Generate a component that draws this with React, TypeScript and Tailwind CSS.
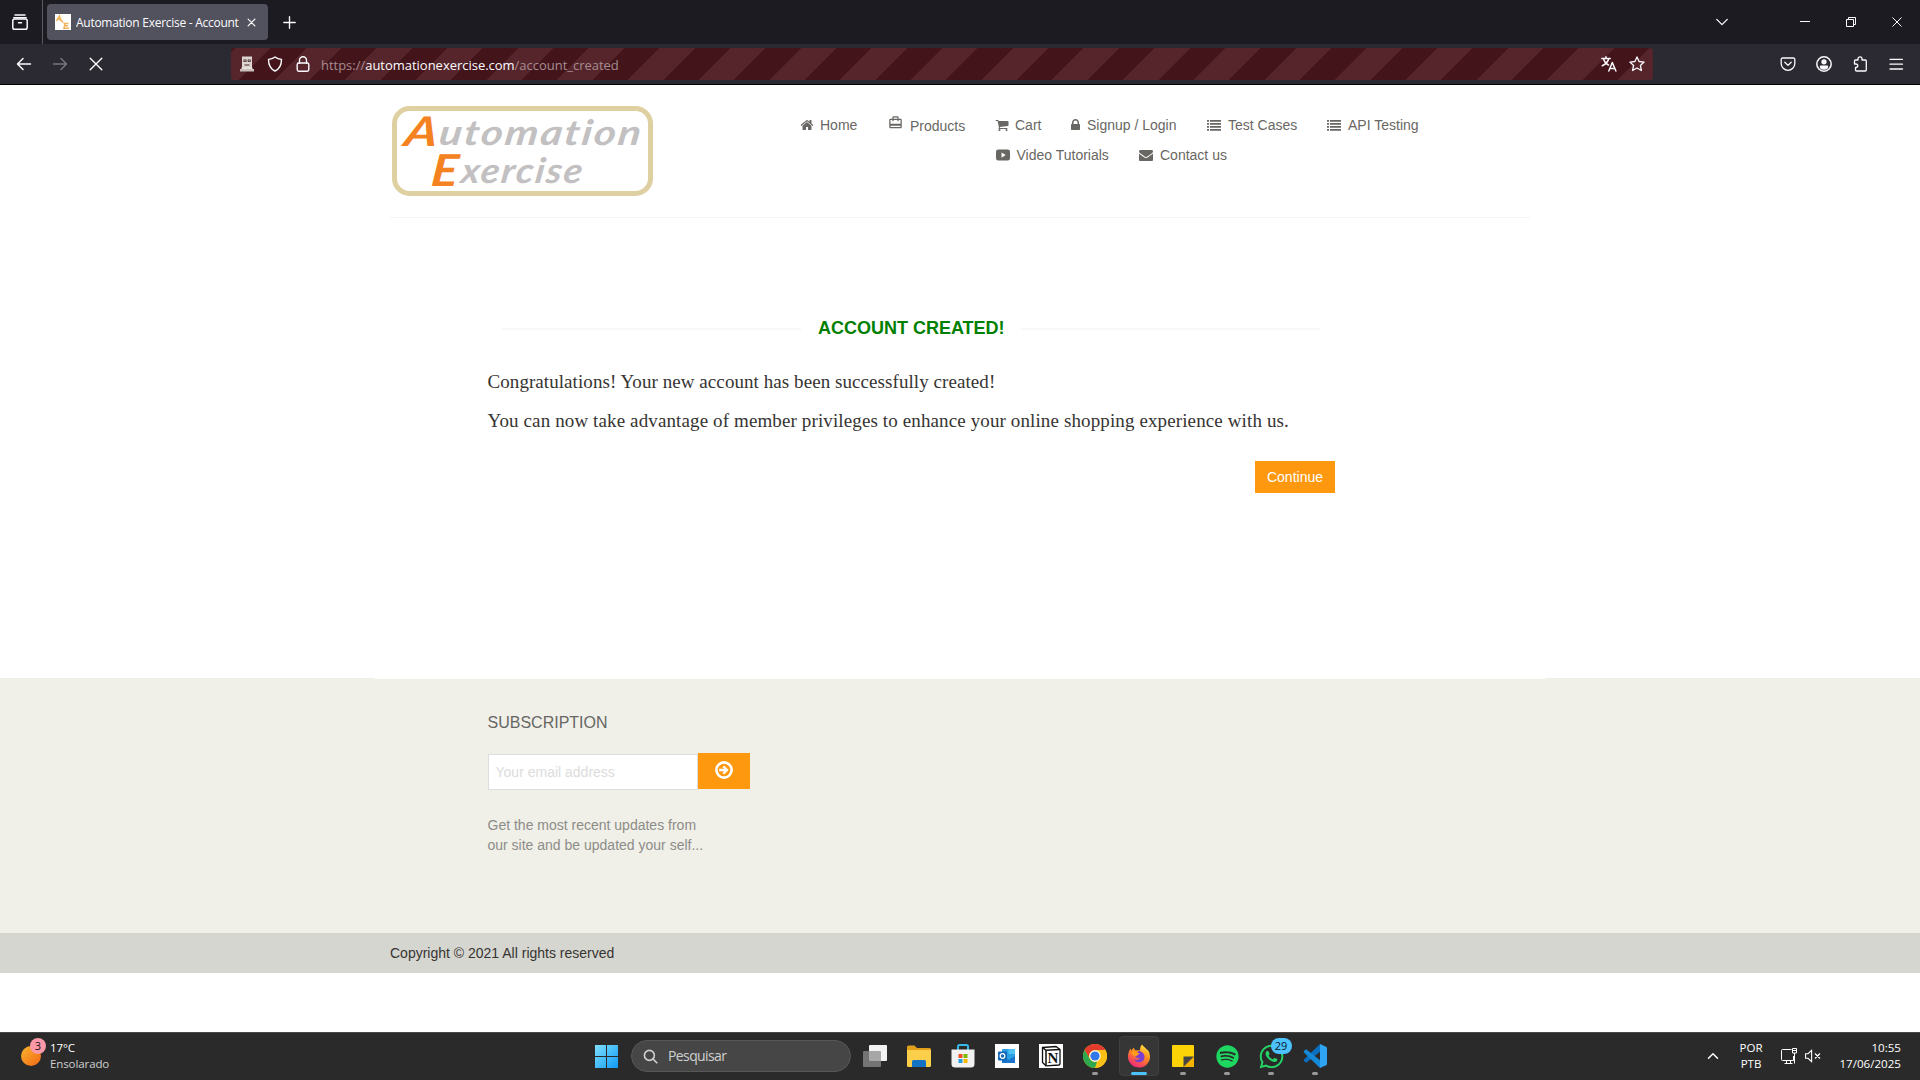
import type { ReactNode } from "react";
import { MdCardTravel } from "react-icons/md";
import { FaSpotify, FaWhatsapp } from "react-icons/fa";

function Stroke({ children, size = 16, w = 1.3, cls = "" }: { children: ReactNode; size?: number; w?: number; cls?: string }) {
  return (
    <svg width={size} height={size} viewBox="0 0 16 16" fill="none" stroke="currentColor" strokeWidth={w} strokeLinecap="round" strokeLinejoin="round" className={`shrink-0 ${cls}`}>
      {children}
    </svg>
  );
}

function Awesome({ d, w = 14, box = "0 0 1792 1792" }: { d: string; w?: number; box?: string }) {
  return (
    <svg width={w} height={14} viewBox={box} fill="currentColor" className="shrink-0">
      <path d={d} fillRule="evenodd" />
    </svg>
  );
}

const HOME =
  "M1472 992v480q0 26-19 45t-45 19h-384v-384h-256v384h-384q-26 0-45-19t-19-45v-480q0-1 .5-3t.5-3l575-474 575 474q1 2 1 6zm223-69l-62 74q-8 9-21 11h-3q-13 0-21-7l-692-577-692 577q-12 8-24 7-13-2-21-11l-62-74q-8-10-7-23.5t11-21.5l719-599q32-26 76-26t76 26l244 204v-195q0-14 9-23t23-9h192q14 0 23 9t9 23v408l219 182q10 8 11 21.5t-7 23.5z";
const CART =
  "M704 1536q0 52-38 90t-90 38-90-38-38-90 38-90 90-38 90 38 38 90zm896 0q0 52-38 90t-90 38-90-38-38-90 38-90 90-38 90 38 38 90zm128-1088v512q0 24-16.5 42.5t-40.5 21.5l-1044 122q13 60 13 70 0 16-24 64h920q26 0 45 19t19 45-19 45-45 19h-1024q-26 0-45-19t-19-45q0-11 8-31.5t16-36 21.5-40 15.5-29.5l-177-823h-204q-26 0-45-19t-19-45 19-45 45-19h256q16 0 28.5 6.5t19.5 15.5 13 24.5 8 26 5.5 29.5 4.5 26h1201q26 0 45 19t19 45z";
const LOCK =
  "M640 768h512v-192q0-106-75-181t-181-75-181 75-75 181v192zm832 96v576q0 40-28 68t-68 28h-960q-40 0-68-28t-28-68v-576q0-40 28-68t68-28h32v-192q0-184 132-316t316-132 316 132 132 316v192h32q40 0 68 28t28 68z";
const LIST =
  "M0 256h256v220H0zM0 640h256v220H0zM0 1024h256v220H0zM0 1408h256v220H0zM384 256h1408v220H384zM384 640h1408v220H384zM384 1024h1408v220H384zM384 1408h1408v220H384z";
const PLAY =
  "M288 192h1216q288 0 288 288v832q0 288-288 288H288q-288 0-288-288V480q0-288 288-288zM704 560v672l540-336z";
const MAIL =
  "M1792 710v794q0 66-47 113t-113 47h-1472q-66 0-113-47t-47-113v-794q44 49 101 87 362 246 497 345 57 42 92.5 65.5t94.5 48 110 24.5h2q51 0 110-24.5t94.5-48 92.5-65.5q170-123 498-345 57-39 100-87zm0-294q0 79-49 151t-122 123q-376 261-468 325-10 7-42.5 31t-54 38.5-52 32.5-57.5 27-50 9h-2q-23 0-50-9t-57.5-27-52-32.5-54-38.5-42.5-31q-91-64-262-182.5t-205-142.5q-62-42-117-115.5t-55-136.5q0-78 41.5-130t118.5-52h1472q65 0 112.5 47t47.5 113z";

function TabStrip() {
  return (
    <div className="flex h-11 items-center bg-[#1c1b22] text-[#fbfbfe]">
      <div className="flex h-11 w-[43px] items-center justify-center border-r border-[#5b5a63] pr-0.5">
        <Stroke w={1.5}>
          <path d="M3 1h10M1.8 3.8h12.4" />
          <rect x="0.8" y="5" width="14.4" height="10.2" rx="1.8" fill="none" />
          <path d="M6.5 8.7h3" />
        </Stroke>
      </div>
      <div className="ml-1 flex h-9 w-[221px] items-center rounded bg-[#52525e] pl-2">
        <svg width="16" height="16" viewBox="0 0 16 16" className="shrink-0">
          <rect width="16" height="16" fill="#fff" />
          <path d="M1.500 7l3-5 1 5M2.500 5.200l4-.7M8.500 9.500h5M10 9.500l-1 4.700h5M9.500 11.800h3.500M6 6l2 2.500" stroke="#f0b35c" strokeWidth="1.500" fill="none" />
        </svg>
        <span className="ml-[5px] w-[168px] overflow-hidden whitespace-nowrap pt-px font-['Open_Sans','Noto_Sans',sans-serif] text-[12px] tracking-[-0.27px]">Automation Exercise - Account</span>
        <Stroke size={9} w={2.2} cls="ml-[3px]">
          <path d="M2 2l12 12M14 2L2 14" />
        </Stroke>
      </div>
      <Stroke size={13} w={1.7} cls="ml-[15px]">
        <path d="M8 1v14M1 8h14" />
      </Stroke>
      <div className="ml-auto flex items-center">
        <Stroke size={14} w={1.5} cls="mr-[71px]">
          <path d="M2 5l6 6 6-6" />
        </Stroke>
        <svg width="10" height="10" className="mr-9" stroke="currentColor"><path d="M0 4.5h10" /></svg>
        <svg width="10" height="10" className="mr-9" stroke="currentColor" fill="none"><path d="M.5 2.5h7v7h-7zM2.5 2.5v-2h7v7h-2" /></svg>
        <svg width="10" height="10" className="mr-[18px]" stroke="currentColor"><path d="M.5.5l9 9M9.5.5l-9 9" /></svg>
      </div>
    </div>
  );
}

function NavBar() {
  return (
    <div className="flex h-[41px] items-center border-b border-black bg-[#2b2a33] text-[#fbfbfe]">
      <div className="flex w-[231px] gap-5 pl-4">
        <Stroke w={1.5}><path d="M1.500 8h13M7 2.500L1.500 8 7 13.500" /></Stroke>
        <Stroke w={1.5} cls="text-[#77767e]"><path d="M14.500 8H1.500M9 2.500L14.500 8 9 13.500" /></Stroke>
        <Stroke w={1.4}><path d="M2.200 2.200l11.600 11.600M13.800 2.200L2.200 13.800" /></Stroke>
      </div>
      <div className="flex h-8 w-[1422px] items-center rounded-[3px] bg-[repeating-linear-gradient(-45deg,#55252b_0_25px,#43151b_25px_50px)] pl-2">
        <svg width="16" height="16" viewBox="0 0 16 16">
          <path d="M3 .5h10V12H3z" fill="#ddd5d0" />
          <path d="M1 13h14v2.500H1z" fill="#c9c0bc" />
          <path d="M2.500 11.500h11V13h-11z" fill="#e8e0dc" />
          <path d="M4.500 3.500h3v2.500h-3zM8.700 3.500h3v2.500h-3zM5.500 8.500h5v1h-5z" fill="#4b2b2e" />
          <path d="M5.500 4.200h1v1h-1zM9.700 4.200h1v1h-1z" fill="#fff" />
        </svg>
        <Stroke w={1.4} cls="ml-3"><path d="M8 1C6 2.500 3.500 3.200 1.500 3.400c0 5 1.500 9.200 6.500 11.600 5-2.400 6.500-6.600 6.500-11.600C12.500 3.200 10 2.500 8 1z" /></Stroke>
        <Stroke w={1.4} cls="ml-3"><path d="M4.500 7V4.300a3.500 3.500 0 017 0V7" /><rect x="2.200" y="7" width="11.600" height="8.200" rx="1.600" /></Stroke>
        <span className="ml-2.5 whitespace-nowrap pt-px font-['Open_Sans','Noto_Sans',sans-serif] text-[13px] leading-5 tracking-[-0.02px] text-[#a58c90]">
          https://<span className="text-[#fbfbfe]">automationexercise.com</span>/account_created
        </span>
        <Stroke w={1.5} cls="ml-auto"><path d="M.8 2.500h8.400M5 .8v1.700M7.800 2.500C7 6 4 8.500 1.300 9.800M2.500 2.500C3.200 5.500 5.500 8 7.500 9M7.800 15l3.500-8.500L14.900 15M9 12.400h4.700" /></Stroke>
        <Stroke w={1.300} cls="ml-3 mr-2"><path d="M8 .9l2.100 4.600 5 .6-3.700 3.400 1 5L8 12l-4.400 2.500 1-5L.9 6.100l5-.6z" /></Stroke>
      </div>
      <div className="ml-auto flex gap-5 pr-4">
        <Stroke w={1.300}><path d="M2.500 2h11a1.300 1.300 0 011.300 1.300V7.500a6.800 6.800 0 01-13.600 0V3.300A1.300 1.300 0 012.500 2zM4.800 6.300L8 9.400l3.200-3.100" /></Stroke>
        <Stroke w={1.500}><circle cx="8" cy="8" r="7.200" /><circle cx="8" cy="5.800" r="1.900" fill="currentColor" /><path d="M4.500 10.200h7c0 1.500-1.500 2.800-3.500 2.800s-3.500-1.300-3.500-2.800z" fill="currentColor" /></Stroke>
        <Stroke w={1.300}><path d="M6 4V2.800a2 2 0 014 0V4h3.300c.7 0 1 .4 1 1v9c0 .7-.4 1-1 1H4.500c-.7 0-1-.4-1-1v-2.500H4a1.700 1.700 0 000-3.500H2.500V5c0-.6.400-1 1-1z" /></Stroke>
        <Stroke w={1.300}><path d="M2 3.300h12.500M2 8.200h12.500M2 13h12.500" /></Stroke>
      </div>
    </div>
  );
}

function Logo() {
  return (
    <svg width="261" height="90" viewBox="0 0 261 90" className="shrink-0" fontStyle="italic">
      <rect x="2.500" y="2.500" width="256" height="85" rx="15" fill="#fff" stroke="#dfd0a1" strokeWidth="5" />
      <g fontFamily="Lato, sans-serif" fontWeight="700" fill="#c2c0c1" style={{ fontVariantLigatures: "none" }}>
        <text transform="translate(46 39) skewX(-8) scale(1.2 1)" fontSize="35" textLength="168" lengthAdjust="spacing">utomation</text>
        <text transform="translate(68 77) skewX(-8) scale(1.100 1)" fontSize="35" textLength="110" lengthAdjust="spacing">xercise</text>
      </g>
      <g fontFamily="Lato, sans-serif" fontWeight="700" fill="#f58220">
        <text transform="translate(11 40) skewX(-10)" fontSize="41" textLength="33" lengthAdjust="spacingAndGlyphs">A</text>
        <text transform="translate(38 80) skewX(-6)" fontSize="44" textLength="27" lengthAdjust="spacingAndGlyphs">E</text>
      </g>
    </svg>
  );
}

function Item({ icon, label, cls }: { icon: ReactNode; label: string; cls: string }) {
  return (
    <a className={`flex shrink-0 items-center whitespace-nowrap ${cls}`}>
      {icon}
      {label}
    </a>
  );
}

function Header() {
  return (
    <header className="mx-auto flex h-[133px] w-[1140px] border-b border-[#f3f3f3] pt-[21px]">
      <div className="w-[410px] pl-0.5"><Logo /></div>
      <nav className="text-[14px] leading-5 text-[#696763]">
        <div className="flex pt-[7px]">
          <Item cls="w-[88px] gap-1.5" icon={<Awesome d={HOME} />} label="Home" />
          <Item cls="w-[107px] gap-[7px] pt-0.5" icon={<MdCardTravel size={15} className="mb-1.5 shrink-0" />} label="Products" />
          <Item cls="w-[76px] gap-1.5" icon={<Awesome d={CART} />} label="Cart" />
          <Item cls="w-[136px] gap-[7px]" icon={<Awesome d={LOCK} w={9} box="320 0 1152 1792" />} label="Signup / Login" />
          <Item cls="w-[120px] gap-[7px]" icon={<Awesome d={LIST} />} label="Test Cases" />
          <Item cls="gap-[7px]" icon={<Awesome d={LIST} />} label="API Testing" />
        </div>
        <div className="flex pl-[195.5px] pt-[9px]">
          <Item cls="w-[143.5px] gap-[7px]" icon={<Awesome d={PLAY} />} label="Video Tutorials" />
          <Item cls="gap-[7px]" icon={<Awesome d={MAIL} />} label="Contact us" />
        </div>
      </nav>
    </header>
  );
}

function Main() {
  return (
    <main className="mx-auto h-[460px] w-[1170px]">
      <div className="ml-[112.5px] w-[847.5px] pt-[100px]">
        <div className="flex items-center justify-center">
          <div className="mt-0.5 h-0.5 w-[299px] bg-[#f7f7f7]" />
          <h2 className="w-[220px] text-center text-[18px] font-bold leading-5 text-[#008000]">ACCOUNT CREATED!</h2>
          <div className="mt-0.5 h-0.5 w-[299px] bg-[#f7f7f7]" />
        </div>
        <div className="flex flex-col gap-[11px] whitespace-nowrap pt-[30px] font-['Liberation_Serif',serif] text-[19px] leading-7 text-[#363432]">
          <p className="tracking-[0.07px]">Congratulations! Your new account has been successfully created!</p>
          <p className="tracking-[0.12px]">You can now take advantage of member privileges to enhance your online shopping experience with us.</p>
        </div>
        <button className="ml-auto mt-[26px] block h-8 w-20 bg-[#fe980f] text-[14px] text-white">Continue</button>
      </div>
    </main>
  );
}

function Footer() {
  return (
    <footer>
      <div className="h-[255px] bg-[#f0f0e9]">
        <div className="mx-auto h-px w-[1170px] bg-white" />
        <div className="ml-[487.5px] w-[262.5px] pt-[34px]">
          <h2 className="text-[16px] leading-5 text-[#666663]">SUBSCRIPTION</h2>
          <div className="flex pt-[20px]">
            <div className="mt-px flex h-9 w-[210.5px] items-center border border-[#ddd] bg-white pl-[7px] text-[14px] text-[#dcdcdc]">Your email address</div>
            <button className="flex h-9 w-[52px] items-center justify-center bg-[#fe980f] pb-0.5">
              <svg width="18" height="18" viewBox="0 0 18 18" fill="none" stroke="#fff" strokeWidth="2.600">
                <circle cx="9" cy="9" r="7.600" />
                <path d="M4.200 9h6" />
                <path d="M8.300 5.300L12 9l-3.700 3.700" strokeWidth="2.400" />
              </svg>
            </button>
          </div>
          <p className="whitespace-nowrap pt-[25px] text-[14px] leading-5 text-[#8c8c88]">
            Get the most recent updates from
            <br />
            our site and be updated your self...
          </p>
        </div>
      </div>
      <div className="h-10 bg-[#d6d6d0] pl-[390px] text-[14px] leading-10 text-[#363432]">Copyright © 2021 All rights reserved</div>
    </footer>
  );
}

function Cell({ children, state = "" }: { children: ReactNode; state?: "" | "run" | "active" }) {
  return (
    <div className="relative flex h-12 w-11 items-center justify-center">
      {state === "active" && <div className="absolute inset-x-[2px] inset-y-1 rounded border border-[#3f3f3f] bg-[#363636]" />}
      <div className="relative">{children}</div>
      {state === "run" && <div className="absolute bottom-[5px] left-[19px] h-[3px] w-1.5 rounded-full bg-[#9a9a9a]" />}
      {state === "active" && <div className="absolute bottom-[5px] left-3.5 h-[3px] w-4 rounded-full bg-[#4cc2ff]" />}
    </div>
  );
}

function Taskbar() {
  return (
    <div className="flex h-12 items-center bg-[#2a2a2a] font-['Open_Sans','Noto_Sans',sans-serif] text-[12px] leading-4 text-white shadow-[inset_0_1px_0_#474747]">
      <div className="flex w-[595px] items-center pl-[21px]">
        <div className="relative h-5 w-5 rounded-full bg-linear-to-br from-[#f5b52e] to-[#f26414]">
          <span className="absolute -top-2 left-[9px] flex h-4 w-4 items-center justify-center rounded-full bg-[#fb99a8] text-[11px] text-[#241014]">3</span>
        </div>
        <div className="ml-[9px] text-[11.500px] tracking-[-0.1px]">
          <div>17°C</div>
          <div className="text-[#cfcfcf]">Ensolarado</div>
        </div>
      </div>
      <svg width="23" height="23" viewBox="0 0 23 23">
        <defs><linearGradient id="win" x1="0" y1="0" x2="1" y2="1"><stop stopColor="#7fe0ff" /><stop offset="1" stopColor="#0f9bf5" /></linearGradient></defs>
        <path d="M0 0h11v11H0zM12 0h11v11H12zM0 12h11v11H0zM12 12h11v11H12z" fill="url(#win)" />
      </svg>
      <div className="ml-[13px] mr-0.5 flex h-8 w-[220px] items-center rounded-full border border-[#575757] bg-[#464646] pl-[11px] text-[14px] text-[#d0d0d0]">
        <Stroke w={1.700} size={15}><circle cx="6.800" cy="6.800" r="5.300" /><path d="M10.700 10.700l4 4" /></Stroke>
        <span className="ml-2.5 tracking-[-0.6px]">Pesquisar</span>
      </div>
      <Cell>
        <svg width="24" height="22" viewBox="0 0 24 22"><rect x="6" y="0" width="18" height="16" rx="1" fill="#f2f2f2" /><rect x="0" y="6" width="18" height="16" rx="1" fill="#8d8d8d" fillOpacity=".75" /></svg>
      </Cell>
      <Cell>
        <svg width="24" height="22" viewBox="0 0 24 22">
          <path d="M0 2a1.500 1.500 0 011.500-1.500h6L10 3h12.500A1.500 1.500 0 0124 4.500V12H0z" fill="#e0a01a" />
          <path d="M0 5h24v15.500a1.500 1.500 0 01-1.500 1.500h-21A1.500 1.500 0 010 20.500z" fill="#fccf4a" />
          <path d="M5 22v-5.500A1.500 1.500 0 016.500 15h11a1.500 1.500 0 011.500 1.500V22z" fill="#1273c4" />
        </svg>
      </Cell>
      <Cell>
        <svg width="24" height="24" viewBox="0 0 24 24">
          <path d="M7 6V2.500A1.500 1.500 0 018.500 1h7A1.500 1.500 0 0117 2.500V6" fill="none" stroke="#35b8ea" strokeWidth="2" />
          <path d="M.5 5.500h23V20a3.500 3.500 0 01-3.500 3.500H4A3.500 3.500 0 01.5 20z" fill="#f1f1f1" />
          <path d="M7.500 10h4v4h-4z" fill="#f04e23" /><path d="M12.500 10h4v4h-4z" fill="#7eb900" /><path d="M7.500 15h4v4h-4z" fill="#1f9fe8" /><path d="M12.500 15h4v4h-4z" fill="#fbb800" />
        </svg>
      </Cell>
      <Cell>
        <svg width="24" height="24" viewBox="0 0 24 24">
          <rect width="24" height="24" fill="#fff" />
          <rect x="7" y="5" width="13" height="14" rx="1" fill="#2b9fe6" />
          <path d="M13.500 5H20v5h-6.500z" fill="#4ec3f5" /><path d="M7 12l6.500 4 6.500-4v7H7z" fill="#1a76cc" />
          <rect x="3" y="7.500" width="9" height="9" rx="1" fill="#1068b8" /><circle cx="7.500" cy="12" r="2.300" stroke="#fff" strokeWidth="1.300" fill="none" />
        </svg>
      </Cell>
      <Cell>
        <svg width="24" height="24" viewBox="0 0 24 24">
          <rect width="24" height="24" fill="#fff" />
          <path d="M3.500 3.500L17 2.500l4 3V20l-1 1-13 .8-3.500-3.300z" fill="#fff" stroke="#111" strokeWidth="1.300" />
          <path d="M3.500 3.500L7 6.300l14-.8M7 6.300v15.200" fill="none" stroke="#111" strokeWidth="1.500" />
          <text x="14" y="18.600" textAnchor="middle" fontFamily="'Liberation Serif', serif" fontWeight="700" fontSize="15" fill="#111">N</text>
        </svg>
      </Cell>
      <Cell state="run">
        <svg width="24" height="24" viewBox="0 0 24 24">
          <circle cx="12" cy="12" r="12" fill="#fbc116" />
          <path d="M1.600 6A12 12 0 0122.400 6H12a6 6 0 00-5.200 9z" fill="#e33b2e" />
          <path d="M1.600 6l5.200 9A6 6 0 0014 17.700L12 24A12 12 0 011.600 6z" fill="#2da94f" />
          <path d="M12 24l5.200-9A6 6 0 0012 6h10.400A12 12 0 0112 24z" fill="#fbc116" />
          <circle cx="12" cy="12" r="5.700" fill="#fff" /><circle cx="12" cy="12" r="4.600" fill="#3478e8" />
        </svg>
      </Cell>
      <Cell state="active">
        <svg width="24" height="24" viewBox="0 0 24 24">
          <defs>
            <linearGradient id="fox" x1=".8" y1="0" x2=".3" y2="1"><stop stopColor="#ffe83d" /><stop offset=".45" stopColor="#ff8a1e" /><stop offset="1" stopColor="#f0247c" /></linearGradient>
          </defs>
          <path d="M15 .5c1 2 3.500 3 5 5.200 1.500-.2 3 3.800 3 7A11 11 0 011 12.500c0-3 1-6 2.500-8l.8 2.300C5.500 5 6.500 4 7 3.500c0 1.500.8 2.500 2 3 1.500-.5 2.500-.5 4 0C13 4 13.500 2 15 .5z" fill="url(#fox)" />
          <path d="M7 11c1 0 2-1 3.500-1-.5-1.500 0-2.500 1-3 3 0 6 2.500 6 6a5.500 5.500 0 01-10.500 2c2 1.500 5 1 6-1-2.500.5-5-.500-6-3z" fill="#7a3fd0" />
          <path d="M4 9c1-1.500 3-2 5-1.500 1 .5 1.500 1.500 3.500 2-.5 1.500-2.500 1.300-3.500 3.200C7 12 5 11 4 9z" fill="#ff9a1f" />
        </svg>
      </Cell>
      <Cell state="run">
        <svg width="22" height="22" viewBox="0 0 22 22"><path d="M0 1a1 1 0 011-1h20a1 1 0 011 1v10.500L11.500 22H1a1 1 0 01-1-1z" fill="#fcd307" /><path d="M11.500 11.500H22L11.500 22z" fill="#454545" /><path d="M22 11.500V22H11.500z" fill="#f5b301" /></svg>
      </Cell>
      <Cell state="run"><FaSpotify size={23} color="#1ed760" /></Cell>
      <Cell state="run">
        <FaWhatsapp size={27} color="#25d366" />
        <span className="absolute -top-[5px] left-[13px] flex h-4 w-[21px] items-center justify-center rounded-full bg-[#4cc2ff] text-[11px] text-[#0a1c28]">29</span>
      </Cell>
      <Cell state="run">
        <svg width="24" height="24" viewBox="0 0 24 24">
          <path d="M17 0L1 15.500c-.5.500-.5 1 0 1.500l1.300 1.200c.5.400 1 .4 1.500 0L18 7z" fill="#0b6fc0" />
          <path d="M17 24L1 8.500c-.5-.5-.5-1 0-1.500l1.300-1.200c.5-.4 1-.4 1.500 0L18 17z" fill="#1688d8" />
          <path d="M17 0l6 2.700c.6.300 1 .8 1 1.500v15.600c0 .7-.4 1.200-1 1.500L17 24z" fill="#2fa4f2" />
        </svg>
      </Cell>
      <div className="ml-auto flex items-center pr-[19px]">
        <Stroke size={12} w={2} cls="mr-5"><path d="M2 11l6-6 6 6" /></Stroke>
        <div className="w-[24px] text-center text-[11.500px]">POR<br />PTB</div>
        <svg width="16" height="16" viewBox="0 0 16 16" fill="none" stroke="currentColor" className="ml-[18px]"><path d="M10.500 1.500h-9a1 1 0 00-1 1v9a1 1 0 001 1h11V8M3.500 15.500h8M5.500 12.500v3M9.500 12.500v3M11.500.500h4v4.500h-4zM13.500 5v10.500M11.500 2.500h4" /></svg>
        <svg width="16" height="14" viewBox="0 0 16 14" fill="none" stroke="currentColor" strokeWidth="1.100" className="ml-2"><path d="M.6 4.700h2.500l3.500-3.400v11.400L3.100 9.300H.6zM10 4.500l5 5M15 4.500l-5 5" /></svg>
        <div className="ml-[17px] w-[63px] whitespace-nowrap text-right text-[11.600px]">10:55<br />17/06/2025</div>
      </div>
    </div>
  );
}

export default function App() {
  return (
    <div className="flex h-[1080px] w-[1920px] flex-col overflow-hidden bg-white font-['Liberation_Sans',sans-serif]">
      <TabStrip />
      <NavBar />
      <Header />
      <Main />
      <Footer />
      <div className="grow" />
      <Taskbar />
    </div>
  );
}
